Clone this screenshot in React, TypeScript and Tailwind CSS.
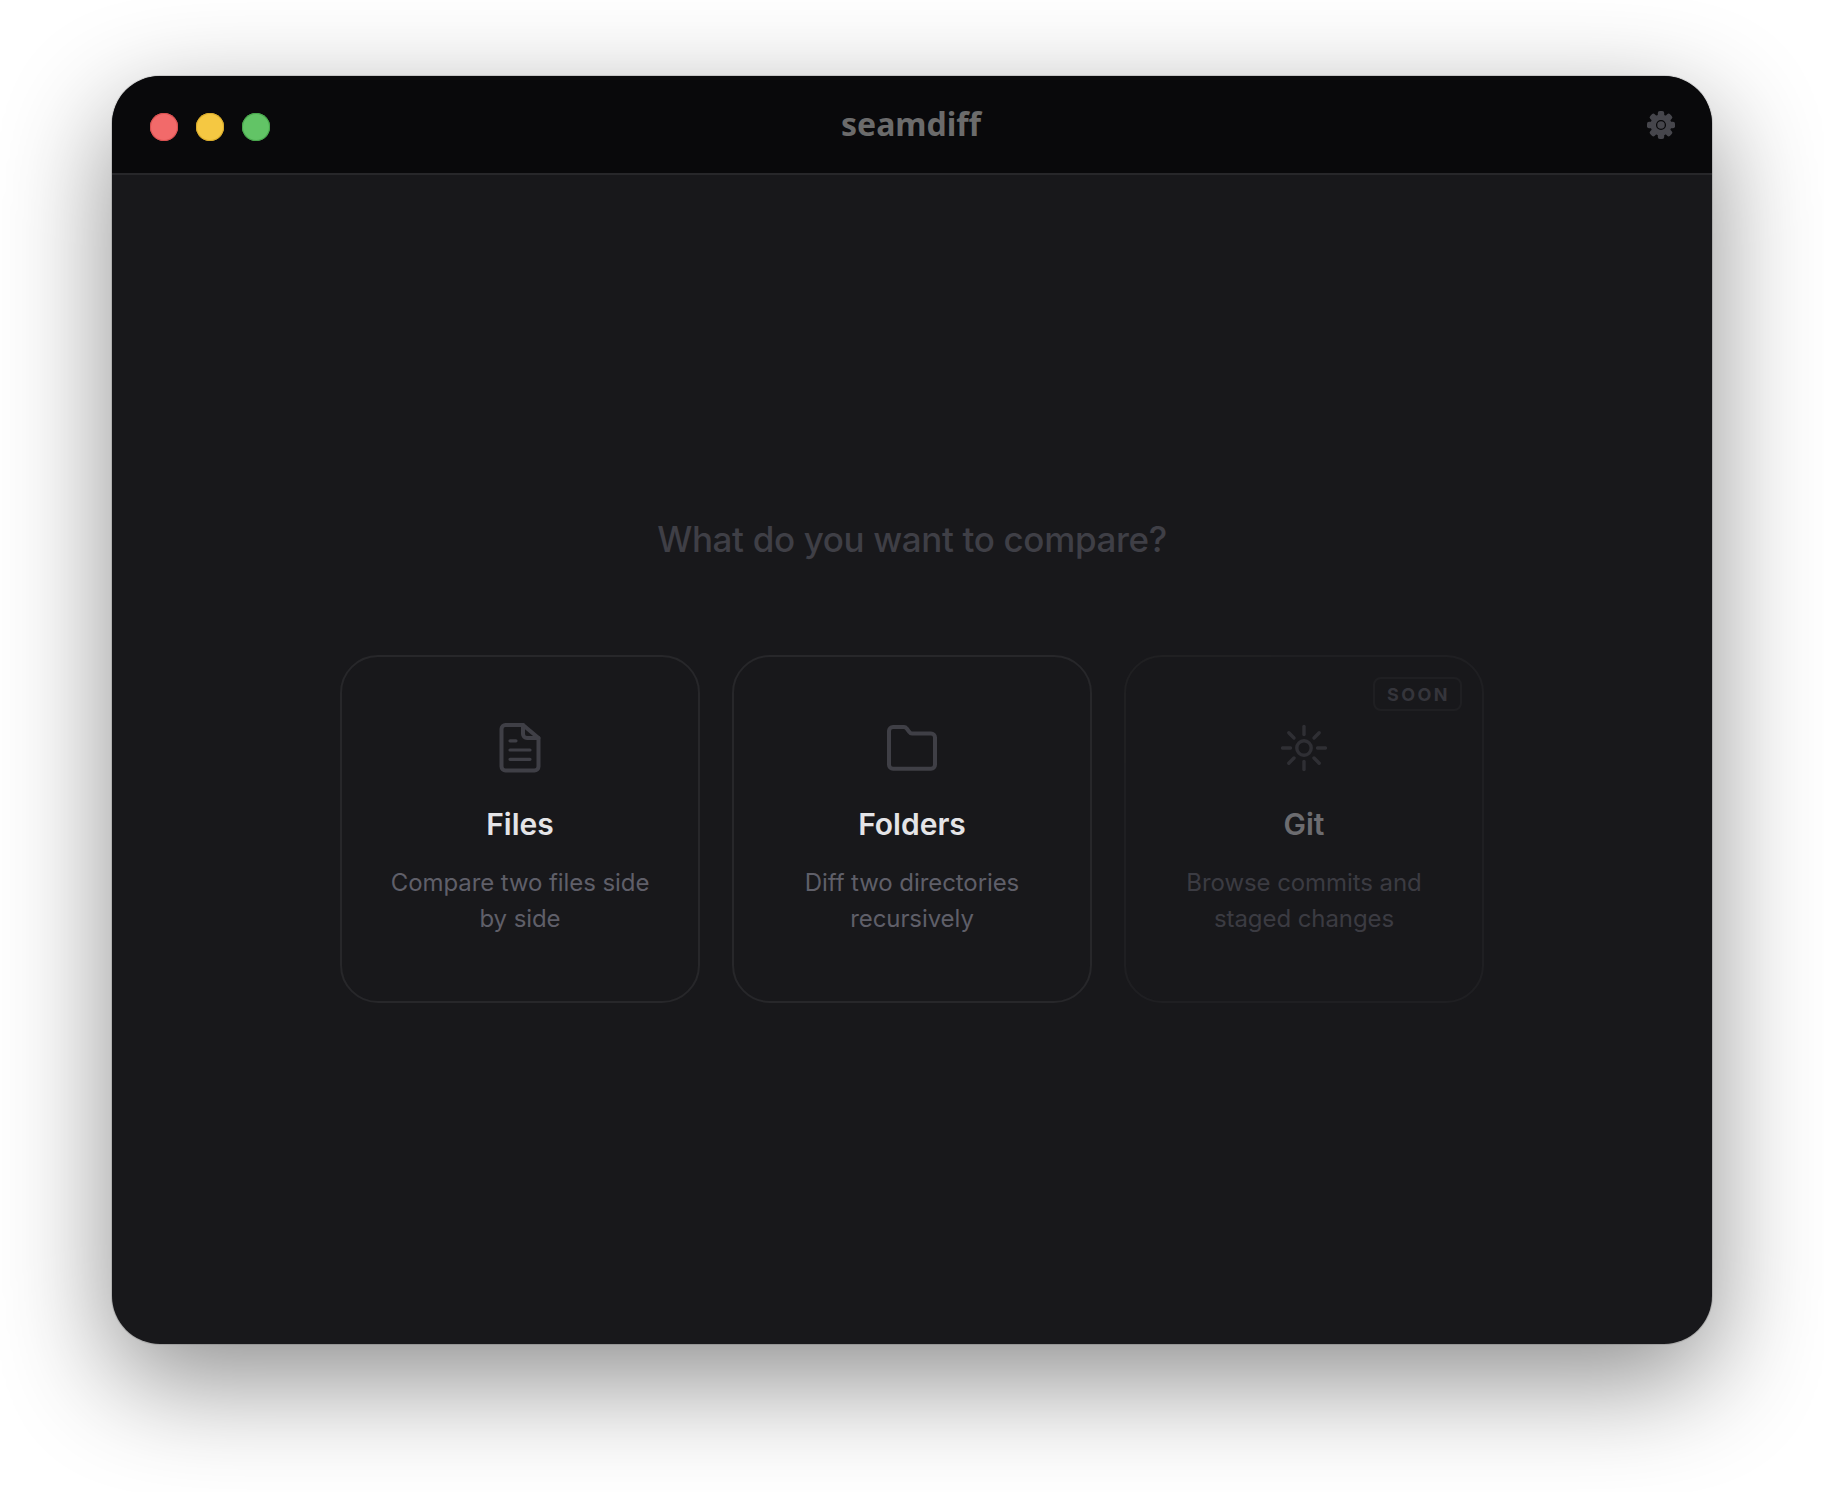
export default function App() {
  const rays = [
    "M28 6.5V14.5", "M28 41.5V49.5", "M6.5 28H14.5", "M41.5 28H49.5",
    "M12.8 12.8L18 18", "M38 38L43.2 43.2", "M12.8 43.2L18 38", "M38 18L43.2 12.8",
  ];
  const teeth = [0, 45, 90, 135, 180, 225, 270, 315];
  const Card = ({ title, lines, icon, soon }: { title: string; lines: string; icon: React.ReactNode; soon?: boolean }) => (
    <div className={`relative flex h-[348px] w-[360px] flex-col items-center justify-center rounded-[38px] border-2 border-[#27272a] ${soon ? "opacity-50" : ""}`}>
      {soon && (
        <span className="absolute right-[20px] top-[20px] flex h-[34px] w-[89px] items-center justify-center rounded-[8px] border-2 border-[#27272a] pl-[2px] pt-[2px] text-[18px] font-bold tracking-[2.4px] text-[#52525b]">
          SOON
        </span>
      )}
      {icon}
      <h2 className={`mt-[30px] text-[30px] font-semibold leading-[36px] ${soon ? "text-[#c0c0c4]" : "text-[#e4e4e7]"}`}>{title}</h2>
      <p className="mt-[23px] max-w-[280px] text-center text-[24px] leading-[36px] tracking-[-0.08px] text-[#5f5f69]">{lines}</p>
    </div>
  );
  return (
    <div className="h-[1492px] w-full bg-white pb-[148px] pl-[112px] pr-[112px] pt-[76px] font-['Inter',sans-serif]">
      <div className="flex h-full flex-col overflow-hidden rounded-[48px] bg-[#18181b] shadow-[0_0_0_1px_rgba(0,0,0,0.12),0_36px_110px_rgba(0,0,0,0.45)]">
        <header className="relative flex h-[99px] shrink-0 items-center justify-between border-b-2 border-[#27272a] bg-[#09090b] pl-[38px] pr-[36px]">
          <div className="flex gap-[18px] pt-[4px]">
            <span className="h-[28px] w-[28px] rounded-full bg-[#f26a6a] ring-1 ring-inset ring-[#d94f4f]" />
            <span className="h-[28px] w-[28px] rounded-full bg-[#f5c842] ring-1 ring-inset ring-[#d9ab2a]" />
            <span className="h-[28px] w-[28px] rounded-full bg-[#62c466] ring-1 ring-inset ring-[#47a64b]" />
          </div>
          <span className="absolute left-0 right-0 top-[26px] pr-[2px] text-center font-['Noto_Sans',sans-serif] text-[32px] font-bold leading-[44px] text-[#6b6b6b]">
            seamdiff
          </span>
          <svg width="30" height="30" viewBox="0 0 30 30" className="text-[#46464c]">
            <g fill="currentColor">
              <circle cx="15" cy="15" r="10.5" />
              {teeth.map((a) => (
                <rect key={a} x="11.8" y="1" width="6.4" height="7" rx="2" transform={`rotate(${a} 15 15)`} />
              ))}
            </g>
            <circle cx="15" cy="15" r="4.4" fill="currentColor" stroke="#09090b" strokeWidth="1.3" />
          </svg>
        </header>
        <main className="flex flex-1 flex-col items-center justify-center">
          <h1 className="mb-[94px] text-[35px] font-medium leading-[44px] tracking-[-0.36px] text-[#3f3f46]">What do you want to compare?</h1>
          <div className="flex gap-[32px]">
            <Card
              title="Files"
              lines="Compare two files side by side"
              icon={
                <svg width="56" height="56" viewBox="0 0 56 56" fill="none" stroke="#3f3f46" strokeWidth="4" strokeLinecap="round" strokeLinejoin="round">
                  <path d="M31 5H13.5a4 4 0 0 0-4 4V46.5a4 4 0 0 0 4 4H42.5a4 4 0 0 0 4-4V18Z" />
                  <path d="M31 5V14a4 4 0 0 0 4 4H46.5" />
                  <path strokeWidth="3.2" d="M18 20.8H24M18 30H38M18 39.3H38" />
                </svg>
              }
            />
            <Card
              title="Folders"
              lines="Diff two directories recursively"
              icon={
                <svg width="56" height="56" viewBox="0 0 56 56" fill="none" stroke="#3f3f46" strokeWidth="4" strokeLinecap="round" strokeLinejoin="round">
                  <path d="M9 7H20a3 3 0 0 1 2.5 1.3L25.5 12.2a3 3 0 0 0 2.5 1.3H47a4 4 0 0 1 4 4V44.7a4 4 0 0 1-4 4H9a4 4 0 0 1-4-4V11a4 4 0 0 1 4-4Z" />
                </svg>
              }
            />
            <Card
              soon
              title="Git"
              lines="Browse commits and staged changes"
              icon={
                <svg width="56" height="56" viewBox="0 0 56 56" fill="none" stroke="#46464e" strokeWidth="3.4" strokeLinecap="round">
                  <circle cx="28" cy="28" r="7.2" />
                  {rays.map((d) => (
                    <path key={d} d={d} />
                  ))}
                </svg>
              }
            />
          </div>
        </main>
      </div>
    </div>
  );
}
